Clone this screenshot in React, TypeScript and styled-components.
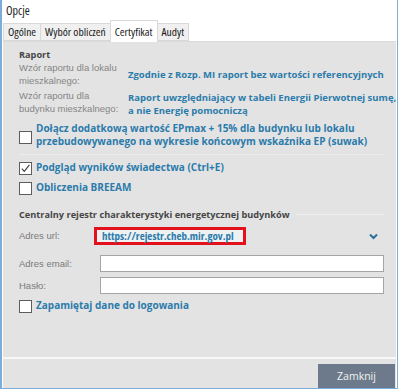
import React, { useState } from 'react';
import styled, { createGlobalStyle } from 'styled-components';

const GlobalStyle = createGlobalStyle`
  html, body {
    margin: 0;
    padding: 0;
    background: #ffffff;
  }
  body {
    font-family: "Liberation Sans", Arial, sans-serif;
  }
`;

const cond = (stretch: number) => `font-family: "Open Sans", "Liberation Sans", sans-serif; font-stretch: ${stretch}%;`;

const Window = styled.div`
  width: 395px;
  height: 388px;
  border: 1px solid #7cadd8;
  border-left-width: 2px;
  border-top: none;
  background: #ffffff;
  display: flex;
  flex-direction: column;
`;

const TitleBar = styled.div`
  height: 21px;
  display: flex;
  align-items: center;
  padding-left: 4px;
  ${cond(75)}
  font-size: 12px;
  color: #1a1a1a;
`;

const TabsRow = styled.div`
  display: flex;
  align-items: flex-end;
  height: 20px;
  padding-left: 1px;
  position: relative;
  z-index: 1;
`;

const Tab = styled.button<{ $active?: boolean }>`
  height: ${p => (p.$active ? '22px' : '18px')};
  margin-bottom: ${p => (p.$active ? '-1px' : '0')};
  padding: 0 4px;
  border: 1px solid #d9d9d9;
  border-bottom: ${p => (p.$active ? 'none' : '1px solid #d9d9d9')};
  margin-right: -1px;
  background: ${p => (p.$active ? '#ffffff' : '#f0f0f0')};
  ${cond(75)}
  font-size: 11.5px;
  color: #1a1a1a;
  cursor: pointer;
`;

const Panel = styled.div`
  margin: 0 1px 0 1px;
  background: #e3e3e3;
  border-top: 1px solid #dadada;
  border-bottom: 2px solid #f7f7f7;
  height: 311px;
  padding: 6px 4px 0 16px;
  display: flex;
  flex-direction: column;
`;

const Section = styled.div<{ $divider?: boolean; $gap?: number }>`
  display: flex;
  flex-direction: column;
  padding-bottom: ${p => (p.$divider ? '6px' : '0')};
  border-bottom: ${p => (p.$divider ? '1px solid #ececec' : 'none')};
  margin-top: ${p => p.$gap ?? 0}px;
  margin-right: 8px;
`;

const GroupTitle = styled.div<{ $line?: boolean }>`
  display: flex;
  align-items: center;
  gap: 6px;
  height: 13px;
  ${cond(95)}
  font-size: 9.2px;
  font-weight: bold;
  color: #464646;
  white-space: nowrap;

  &::after {
    content: '';
    flex: 1;
    height: 1px;
    background: ${p => (p.$line ? '#eeeeee' : 'transparent')};
  }
`;

const OptionRow = styled.div`
  display: grid;
  grid-template-columns: 109px 1fr;
  align-items: start;
  margin-bottom: 2px;
`;

const Label = styled.div`
  font-size: 9.5px;
  line-height: 13px;
  color: #858585;
`;

const ValueLink = styled.div<{ $offset: number }>`
  ${cond(95)}
  font-size: 9.5px;
  line-height: 13px;
  font-weight: bold;
  color: #2b7bab;
  margin-top: ${p => p.$offset}px;
  white-space: nowrap;
`;

const CheckRow = styled.label<{ $gap: number }>`
  display: flex;
  align-items: flex-start;
  gap: 4px;
  margin-top: ${p => p.$gap}px;
  cursor: pointer;
`;

const Box = styled.span<{ $offset: number }>`
  flex: none;
  width: 11px;
  height: 11px;
  border: 1px solid #5c5c5c;
  background: #ffffff;
  display: flex;
  align-items: center;
  justify-content: center;
  margin-top: ${p => p.$offset}px;
`;

const CheckText = styled.span`
  ${cond(95)}
  font-size: 10px;
  line-height: 13px;
  font-weight: bold;
  color: #2b7bab;
  white-space: nowrap;
`;

const FieldRow = styled.div<{ $gap: number; $labelWidth: number }>`
  display: grid;
  grid-template-columns: ${p => p.$labelWidth}px 1fr;
  align-items: center;
  margin-top: ${p => p.$gap}px;
`;

const FieldLabel = styled.div`
  font-size: 9.5px;
  color: #7a7a7a;
`;

const UrlRow = styled.div`
  display: flex;
  align-items: flex-start;
  justify-content: space-between;
`;

const UrlBox = styled.div`
  box-sizing: border-box;
  height: 18px;
  width: 152px;
  border: 3px solid #e3111c;
  background: #eef0f2;
  padding: 0 5px;
  ${cond(75)}
  font-size: 11px;
  line-height: 11px;
  font-weight: bold;
  color: #2b7bab;
  white-space: nowrap;
`;

const Chevron = styled.span`
  display: flex;
  margin: 12px 6px 0 0;
`;

const Input = styled.input`
  height: 17px;
  width: 284px;
  border: 1px solid #a5a5a5;
  background: #ffffff;
  padding: 0 3px;
  box-sizing: border-box;
  font-size: 10px;
  outline: none;
`;

const Footer = styled.div`
  flex: 1;
  background: #e3e3e3;
  margin: 0 1px;
  display: flex;
  justify-content: flex-end;
  align-items: flex-start;
  padding: 5px 1px 0 0;
`;

const CloseButton = styled.button`
  width: 77px;
  height: 24px;
  border: none;
  background: #6d7a8b;
  color: #f2f2f2;
  ${cond(95)}
  font-size: 10.5px;
  cursor: pointer;
`;

const Check = () => (
  <svg width="11" height="11" viewBox="0 0 11 11">
    <path d="M1.8 5.6 L4.3 8.4 L9.4 1.8" fill="none" stroke="#3a3a3a" strokeWidth="1.1" />
  </svg>
);

type CheckboxProps = { checked?: boolean; gap: number; boxOffset?: number; children: React.ReactNode };

const Checkbox: React.FC<CheckboxProps> = ({ checked, gap, boxOffset = 1, children }) => (
  <CheckRow $gap={gap}>
    <Box $offset={boxOffset}>{checked && <Check />}</Box>
    <CheckText>{children}</CheckText>
  </CheckRow>
);

const tabs = ['Ogólne', 'Wybór obliczeń', 'Certyfikat', 'Audyt'];

export default function App() {
  const [active, setActive] = useState('Certyfikat');

  return (
    <>
      <GlobalStyle />
      <Window>
        <TitleBar>Opcje</TitleBar>
        <TabsRow>
          {tabs.map(t => (
            <Tab key={t} $active={t === active} onClick={() => setActive(t)}>
              {t}
            </Tab>
          ))}
        </TabsRow>
        <Panel>
          <Section $divider>
            <GroupTitle>Raport</GroupTitle>
            <OptionRow>
              <Label>Wzór raportu dla lokalu<br />mieszkalnego:</Label>
              <ValueLink $offset={7}>Zgodnie z Rozp. MI raport bez wartości referencyjnych</ValueLink>
            </OptionRow>
            <OptionRow>
              <Label>Wzór raportu dla<br />budynku mieszkalnego:</Label>
              <ValueLink $offset={2}>Raport uwzględniający w tabeli Energii Pierwotnej sumę,<br />a nie Energię pomocniczą</ValueLink>
            </OptionRow>
            <Checkbox gap={3} boxOffset={9}>
              Dołącz dodatkową wartość EPmax + 15% dla budynku lub lokalu<br />
              przebudowywanego na wykresie końcowym wskaźnika EP (suwak)
            </Checkbox>
          </Section>

          <Section>
            <Checkbox checked gap={6}>Podgląd wyników świadectwa (Ctrl+E)</Checkbox>
            <Checkbox gap={6}>Obliczenia BREEAM</Checkbox>
          </Section>

          <Section $gap={13}>
            <GroupTitle $line>Centralny rejestr charakterystyki energetycznej budynków</GroupTitle>
            <UrlRow>
              <FieldRow $gap={6} $labelWidth={75}>
                <FieldLabel>Adres url:</FieldLabel>
                <UrlBox>https://rejestr.cheb.mir.gov.pl</UrlBox>
              </FieldRow>
              <Chevron>
                <svg width="9" height="7" viewBox="0 0 9 7">
                  <path d="M1 1.5 L4.5 5 L8 1.5" fill="none" stroke="#2b6f9c" strokeWidth="2" />
                </svg>
              </Chevron>
            </UrlRow>
            <FieldRow $gap={10} $labelWidth={81}>
              <FieldLabel>Adres email:</FieldLabel>
              <Input type="text" />
            </FieldRow>
            <FieldRow $gap={5} $labelWidth={81}>
              <FieldLabel>Hasło:</FieldLabel>
              <Input type="password" />
            </FieldRow>
            <Checkbox gap={5}>Zapamiętaj dane do logowania</Checkbox>
          </Section>
        </Panel>
        <Footer>
          <CloseButton>Zamknij</CloseButton>
        </Footer>
      </Window>
    </>
  );
}
